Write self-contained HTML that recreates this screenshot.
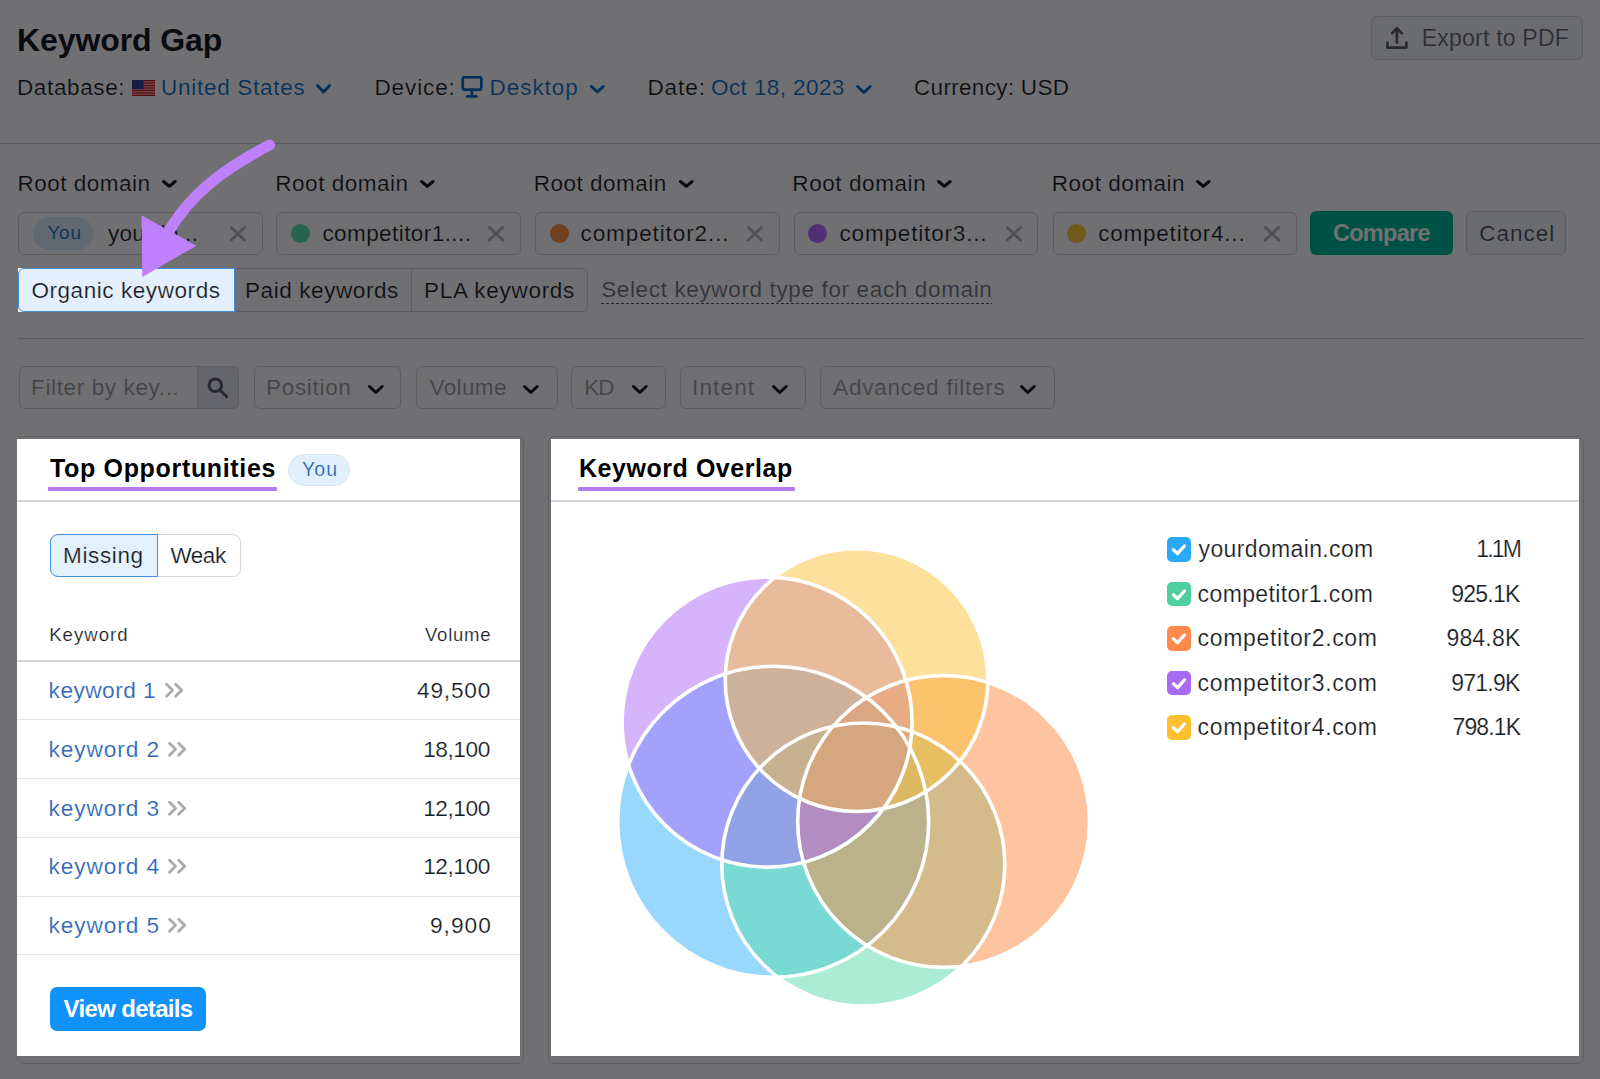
<!DOCTYPE html>
<html><head><meta charset="utf-8"><style>
html,body{margin:0;padding:0;}
body{width:1600px;height:1079px;overflow:hidden;position:relative;background:#fff;font-family:"Liberation Sans",sans-serif;}
.t{position:absolute;white-space:nowrap;line-height:1;}
.b{position:absolute;}
#ov{position:absolute;left:0;top:0;width:1600px;height:1079px;background:rgba(0,0,4,0.56);}
</style></head><body>
<svg class="b" style="left:132px;top:80px" width="23" height="16" viewBox="0 0 23 16"><rect width="23" height="16" fill="#F4A0A0"/><rect y="0.00" width="23" height="1.23" fill="#D02828"/><rect y="2.46" width="23" height="1.23" fill="#D02828"/><rect y="4.92" width="23" height="1.23" fill="#D02828"/><rect y="7.38" width="23" height="1.23" fill="#D02828"/><rect y="9.85" width="23" height="1.23" fill="#D02828"/><rect y="12.31" width="23" height="1.23" fill="#D02828"/><rect y="14.77" width="23" height="1.23" fill="#D02828"/><rect width="11.5" height="9" fill="#3A3C9A"/></svg>
<svg class="b" style="left:314.25px;top:82.00px" width="19.00" height="13.50"><path d="M3.50 3.50 L9.50 10.00 L15.50 3.50" fill="none" stroke="#006DCA" stroke-width="3" stroke-linecap="round" stroke-linejoin="round"/></svg>
<svg class="b" style="left:461px;top:76px" width="23" height="22" viewBox="0 0 23 22"><rect x="1.75" y="1.25" width="18.6" height="12.3" rx="1.6" fill="none" stroke="#006DCA" stroke-width="2.7"/><rect x="9.6" y="14" width="2.6" height="5.5" fill="#006DCA"/><rect x="5" y="19" width="11.8" height="2.7" rx="1.3" fill="#006DCA"/></svg>
<svg class="b" style="left:587.50px;top:83.00px" width="18.75" height="12.50"><path d="M3.50 3.50 L9.38 9.00 L15.25 3.50" fill="none" stroke="#006DCA" stroke-width="3" stroke-linecap="round" stroke-linejoin="round"/></svg>
<svg class="b" style="left:853.90px;top:82.50px" width="19.70" height="13.00"><path d="M3.50 3.50 L9.85 9.50 L16.20 3.50" fill="none" stroke="#006DCA" stroke-width="3" stroke-linecap="round" stroke-linejoin="round"/></svg>
<div class="b" style="left:1370.5px;top:16px;width:212.00px;height:43.50px;border:1px solid #D3D5DB;border-radius:6px;box-sizing:border-box;background:#F4F5F9"></div>
<svg class="b" style="left:1384px;top:25px" width="26" height="26" viewBox="0 0 26 26"><path d="M3.4 17.7 V22.6 H22.4 V17.7" fill="none" stroke="#5E616B" stroke-width="2.7" stroke-linecap="round" stroke-linejoin="round"/><path d="M12.9 17.6 V3.8" fill="none" stroke="#5E616B" stroke-width="2.7" stroke-linecap="round"/><path d="M8 8.3 L12.9 3.3 L17.8 8.3" fill="none" stroke="#5E616B" stroke-width="2.7" stroke-linecap="round" stroke-linejoin="round"/></svg>
<div class="b" style="left:0px;top:143px;width:1600.00px;height:1.00px;background:#D0D2D8"></div>
<svg class="b" style="left:159.90px;top:178.00px" width="18.70" height="11.75"><path d="M3.50 3.50 L9.35 8.25 L15.20 3.50" fill="none" stroke="#171A22" stroke-width="3" stroke-linecap="round" stroke-linejoin="round"/></svg>
<div class="b" style="left:18.4px;top:211.5px;width:244.50px;height:43.25px;border:1px solid #D3D5DB;border-radius:6px;box-sizing:border-box;background:#fff"></div>
<svg class="b" style="left:228.20px;top:223.60px" width="20.00" height="19.50"><path d="M3.40 3.40 L16.60 16.10 M16.60 3.40 L3.40 16.10" fill="none" stroke="#B4B5BA" stroke-width="2.8" stroke-linecap="round"/></svg>
<div class="b" style="left:32.7px;top:217px;width:60.30px;height:32.50px;background:#E0EDF8;border-radius:16px"></div>
<svg class="b" style="left:417.75px;top:178.00px" width="18.70" height="11.75"><path d="M3.50 3.50 L9.35 8.25 L15.20 3.50" fill="none" stroke="#171A22" stroke-width="3" stroke-linecap="round" stroke-linejoin="round"/></svg>
<div class="b" style="left:276.25px;top:211.5px;width:244.50px;height:43.25px;border:1px solid #D3D5DB;border-radius:6px;box-sizing:border-box;background:#fff"></div>
<svg class="b" style="left:486.05px;top:223.60px" width="20.00" height="19.50"><path d="M3.40 3.40 L16.60 16.10 M16.60 3.40 L3.40 16.10" fill="none" stroke="#B4B5BA" stroke-width="2.8" stroke-linecap="round"/></svg>
<div class="b" style="left:290.75px;top:224px;width:19.00px;height:19.00px;background:#5BE6B0;border-radius:50%"></div>
<svg class="b" style="left:676.50px;top:178.00px" width="18.70" height="11.75"><path d="M3.50 3.50 L9.35 8.25 L15.20 3.50" fill="none" stroke="#171A22" stroke-width="3" stroke-linecap="round" stroke-linejoin="round"/></svg>
<div class="b" style="left:535px;top:211.5px;width:244.50px;height:43.25px;border:1px solid #D3D5DB;border-radius:6px;box-sizing:border-box;background:#fff"></div>
<svg class="b" style="left:744.80px;top:223.60px" width="20.00" height="19.50"><path d="M3.40 3.40 L16.60 16.10 M16.60 3.40 L3.40 16.10" fill="none" stroke="#B4B5BA" stroke-width="2.8" stroke-linecap="round"/></svg>
<div class="b" style="left:549.5px;top:224px;width:19.00px;height:19.00px;background:#FF9447;border-radius:50%"></div>
<svg class="b" style="left:935.25px;top:178.00px" width="18.70" height="11.75"><path d="M3.50 3.50 L9.35 8.25 L15.20 3.50" fill="none" stroke="#171A22" stroke-width="3" stroke-linecap="round" stroke-linejoin="round"/></svg>
<div class="b" style="left:793.75px;top:211.5px;width:244.50px;height:43.25px;border:1px solid #D3D5DB;border-radius:6px;box-sizing:border-box;background:#fff"></div>
<svg class="b" style="left:1003.55px;top:223.60px" width="20.00" height="19.50"><path d="M3.40 3.40 L16.60 16.10 M16.60 3.40 L3.40 16.10" fill="none" stroke="#B4B5BA" stroke-width="2.8" stroke-linecap="round"/></svg>
<div class="b" style="left:808.25px;top:224px;width:19.00px;height:19.00px;background:#B46EFF;border-radius:50%"></div>
<svg class="b" style="left:1194.00px;top:178.00px" width="18.70" height="11.75"><path d="M3.50 3.50 L9.35 8.25 L15.20 3.50" fill="none" stroke="#171A22" stroke-width="3" stroke-linecap="round" stroke-linejoin="round"/></svg>
<div class="b" style="left:1052.5px;top:211.5px;width:244.50px;height:43.25px;border:1px solid #D3D5DB;border-radius:6px;box-sizing:border-box;background:#fff"></div>
<svg class="b" style="left:1262.30px;top:223.60px" width="20.00" height="19.50"><path d="M3.40 3.40 L16.60 16.10 M16.60 3.40 L3.40 16.10" fill="none" stroke="#B4B5BA" stroke-width="2.8" stroke-linecap="round"/></svg>
<div class="b" style="left:1067.0px;top:224px;width:19.00px;height:19.00px;background:#FFCC3C;border-radius:50%"></div>
<div class="b" style="left:1310.2px;top:211.1px;width:142.80px;height:43.75px;background:#00B898;border-radius:6px"></div>
<div class="b" style="left:1466.3px;top:211.1px;width:99.40px;height:43.75px;border:1px solid #D3D5DB;border-radius:6px;box-sizing:border-box;background:#F4F5F9"></div>
<div class="b" style="left:18px;top:268px;width:570.00px;height:44.40px;border:1px solid #D3D5DB;border-radius:6px;box-sizing:border-box;background:#fff"></div>
<div class="b" style="left:411px;top:268px;width:1.00px;height:44.40px;background:#D3D5DB"></div>
<svg class="b" style="left:601px;top:303px" width="391" height="1"><line x1="0" y1="0.5" x2="391" y2="0.5" stroke="#5A5C66" stroke-width="1" stroke-dasharray="3 2"/></svg>
<div class="b" style="left:18px;top:338px;width:1565.00px;height:1.00px;background:#D0D2D8"></div>
<div class="b" style="left:18.5px;top:366px;width:220.90px;height:43.30px;border:1px solid #D3D5DB;border-radius:6px;box-sizing:border-box;background:#fff;overflow:hidden"></div>
<div class="b" style="left:196.6px;top:366px;width:42.80px;height:43.30px;border:1px solid #D3D5DB;border-radius:0 6px 6px 0;box-sizing:border-box;background:#E6E8EE"></div>
<svg class="b" style="left:206px;top:376px" width="24" height="24" viewBox="0 0 24 24"><circle cx="9.3" cy="9.3" r="6.3" fill="none" stroke="#5E616B" stroke-width="3"/><path d="M14.2 14.2 L20.6 20.6" stroke="#5E616B" stroke-width="3" stroke-linecap="round"/></svg>
<div class="b" style="left:253.5px;top:366px;width:147.80px;height:43.30px;border:1px solid #D3D5DB;border-radius:6px;box-sizing:border-box;background:#fff"></div>
<svg class="b" style="left:366.30px;top:382.50px" width="19.70" height="13.00"><path d="M3.50 3.50 L9.85 9.50 L16.20 3.50" fill="none" stroke="#171A22" stroke-width="3" stroke-linecap="round" stroke-linejoin="round"/></svg>
<div class="b" style="left:415.75px;top:366px;width:141.75px;height:43.30px;border:1px solid #D3D5DB;border-radius:6px;box-sizing:border-box;background:#fff"></div>
<svg class="b" style="left:521.40px;top:382.50px" width="19.70" height="13.00"><path d="M3.50 3.50 L9.85 9.50 L16.20 3.50" fill="none" stroke="#171A22" stroke-width="3" stroke-linecap="round" stroke-linejoin="round"/></svg>
<div class="b" style="left:570.6px;top:366px;width:95.80px;height:43.30px;border:1px solid #D3D5DB;border-radius:6px;box-sizing:border-box;background:#fff"></div>
<svg class="b" style="left:630.30px;top:382.50px" width="19.70" height="13.00"><path d="M3.50 3.50 L9.85 9.50 L16.20 3.50" fill="none" stroke="#171A22" stroke-width="3" stroke-linecap="round" stroke-linejoin="round"/></svg>
<div class="b" style="left:679.5px;top:366px;width:126.00px;height:43.30px;border:1px solid #D3D5DB;border-radius:6px;box-sizing:border-box;background:#fff"></div>
<svg class="b" style="left:770.20px;top:382.50px" width="19.70" height="13.00"><path d="M3.50 3.50 L9.85 9.50 L16.20 3.50" fill="none" stroke="#171A22" stroke-width="3" stroke-linecap="round" stroke-linejoin="round"/></svg>
<div class="b" style="left:820px;top:366px;width:234.50px;height:43.30px;border:1px solid #D3D5DB;border-radius:6px;box-sizing:border-box;background:#fff"></div>
<svg class="b" style="left:1018.20px;top:382.50px" width="19.70" height="13.00"><path d="M3.50 3.50 L9.85 9.50 L16.20 3.50" fill="none" stroke="#171A22" stroke-width="3" stroke-linecap="round" stroke-linejoin="round"/></svg>
<div class="b" style="left:16.5px;top:435.5px;width:507.00px;height:628.00px;border:1.5px solid #D9DAE0;border-radius:7px;box-sizing:border-box;background:#fff"></div>
<div class="b" style="left:547.5px;top:435.5px;width:1036.00px;height:628.00px;border:1.5px solid #D9DAE0;border-radius:7px;box-sizing:border-box;background:#fff"></div>
<div class="t" id="title" style="left:17.00px;top:23.91px;font-size:32px;font-weight:700;color:#171A22;letter-spacing:-0.100px;">Keyword Gap</div>
<div class="t" id="database" style="left:17.00px;top:77.45px;font-size:22.5px;font-weight:400;color:#171A22;letter-spacing:0.625px;-webkit-text-stroke:0.2px #fff;">Database:</div>
<div class="t" id="united" style="left:161.00px;top:77.45px;font-size:22.5px;font-weight:400;color:#006DCA;letter-spacing:0.726px;-webkit-text-stroke:0.2px #fff;">United States</div>
<div class="t" id="device" style="left:374.50px;top:77.45px;font-size:22.5px;font-weight:400;color:#171A22;letter-spacing:0.873px;-webkit-text-stroke:0.2px #fff;">Device:</div>
<div class="t" id="desktop" style="left:489.50px;top:77.45px;font-size:22.5px;font-weight:400;color:#006DCA;letter-spacing:0.959px;-webkit-text-stroke:0.2px #fff;">Desktop</div>
<div class="t" id="date" style="left:647.40px;top:77.45px;font-size:22.5px;font-weight:400;color:#171A22;letter-spacing:0.945px;-webkit-text-stroke:0.2px #fff;">Date:</div>
<div class="t" id="oct" style="left:711.00px;top:77.45px;font-size:22.5px;font-weight:400;color:#006DCA;letter-spacing:0.409px;-webkit-text-stroke:0.2px #fff;">Oct 18, 2023</div>
<div class="t" id="currency" style="left:914.00px;top:77.45px;font-size:22.5px;font-weight:400;color:#171A22;letter-spacing:0.309px;-webkit-text-stroke:0.2px #fff;">Currency: USD</div>
<div class="t" id="export" style="left:1421.80px;top:27.33px;font-size:23px;font-weight:400;color:#5E616B;letter-spacing:0.210px;-webkit-text-stroke:0.2px #fff;">Export to PDF</div>
<div class="t" id="rd0" style="left:17.40px;top:173.20px;font-size:22.5px;font-weight:400;color:#171A22;letter-spacing:0.500px;-webkit-text-stroke:0.2px #fff;">Root domain</div>
<div class="t" id="rd1" style="left:275.30px;top:173.20px;font-size:22.5px;font-weight:400;color:#171A22;letter-spacing:0.520px;-webkit-text-stroke:0.2px #fff;">Root domain</div>
<div class="t" id="rd2" style="left:533.80px;top:173.20px;font-size:22.5px;font-weight:400;color:#171A22;letter-spacing:0.500px;-webkit-text-stroke:0.2px #fff;">Root domain</div>
<div class="t" id="rd3" style="left:792.30px;top:173.20px;font-size:22.5px;font-weight:400;color:#171A22;letter-spacing:0.580px;-webkit-text-stroke:0.2px #fff;">Root domain</div>
<div class="t" id="rd4" style="left:1051.80px;top:173.20px;font-size:22.5px;font-weight:400;color:#171A22;letter-spacing:0.520px;-webkit-text-stroke:0.2px #fff;">Root domain</div>
<div class="t" id="you_in" style="left:47.40px;top:223.42px;font-size:19px;font-weight:400;color:#006DCA;letter-spacing:0.770px;-webkit-text-stroke:0.2px #E0EDF8;">You</div>
<div class="t" id="yourdo" style="left:108.00px;top:223.05px;font-size:22.5px;font-weight:400;color:#171A22;letter-spacing:0.295px;-webkit-text-stroke:0.2px #fff;">yourdo...</div>
<div class="t" id="comp1" style="left:322.40px;top:223.05px;font-size:22.5px;font-weight:400;color:#171A22;letter-spacing:0.428px;-webkit-text-stroke:0.2px #fff;">competitor1....</div>
<div class="t" id="comp2" style="left:580.50px;top:223.05px;font-size:22.5px;font-weight:400;color:#171A22;letter-spacing:0.903px;-webkit-text-stroke:0.2px #fff;">competitor2...</div>
<div class="t" id="comp3" style="left:839.50px;top:223.05px;font-size:22.5px;font-weight:400;color:#171A22;letter-spacing:0.825px;-webkit-text-stroke:0.2px #fff;">competitor3...</div>
<div class="t" id="comp4" style="left:1098.20px;top:223.05px;font-size:22.5px;font-weight:400;color:#171A22;letter-spacing:0.780px;-webkit-text-stroke:0.2px #fff;">competitor4...</div>
<div class="t" id="compare" style="left:1333.00px;top:222.31px;font-size:23.5px;font-weight:700;color:#FFFFFF;letter-spacing:-0.726px;">Compare</div>
<div class="t" id="cancel" style="left:1479.20px;top:223.15px;font-size:22.5px;font-weight:400;color:#44474F;letter-spacing:1.000px;-webkit-text-stroke:0.2px #fff;">Cancel</div>
<div class="t" id="paid" style="left:245.00px;top:279.95px;font-size:22.5px;font-weight:400;color:#171A22;letter-spacing:0.583px;-webkit-text-stroke:0.2px #fff;">Paid keywords</div>
<div class="t" id="pla" style="left:424.00px;top:279.95px;font-size:22.5px;font-weight:400;color:#171A22;letter-spacing:0.704px;-webkit-text-stroke:0.2px #fff;">PLA keywords</div>
<div class="t" id="select" style="left:601.20px;top:279.25px;font-size:22.5px;font-weight:400;color:#6C6E79;letter-spacing:0.638px;-webkit-text-stroke:0.2px #fff;">Select keyword type for each domain</div>
<div class="t" id="filter" style="left:31.00px;top:377.15px;font-size:22.5px;font-weight:400;color:#9597A0;letter-spacing:0.633px;-webkit-text-stroke:0.2px #fff;">Filter by key...</div>
<div class="t" id="position" style="left:266.00px;top:377.15px;font-size:22.5px;font-weight:400;color:#9597A0;letter-spacing:0.688px;-webkit-text-stroke:0.2px #fff;">Position</div>
<div class="t" id="volume" style="left:429.60px;top:377.15px;font-size:22.5px;font-weight:400;color:#9597A0;letter-spacing:0.368px;-webkit-text-stroke:0.2px #fff;">Volume</div>
<div class="t" id="kd" style="left:584.20px;top:377.15px;font-size:22.5px;font-weight:400;color:#9597A0;letter-spacing:-0.960px;-webkit-text-stroke:0.2px #fff;">KD</div>
<div class="t" id="intent" style="left:692.00px;top:377.15px;font-size:22.5px;font-weight:400;color:#9597A0;letter-spacing:1.164px;-webkit-text-stroke:0.2px #fff;">Intent</div>
<div class="t" id="adv" style="left:833.20px;top:377.15px;font-size:22.5px;font-weight:400;color:#9597A0;letter-spacing:0.763px;-webkit-text-stroke:0.2px #fff;">Advanced filters</div>
<div id="ov"></div>
<div class="b" style="left:18px;top:267.6px;width:215.60px;height:44.80px;background:#fff"></div>
<div class="b" style="left:18px;top:267.6px;width:216.60px;height:44.80px;background:#E3EFFC;border:1px solid #3F8FE0;border-radius:6px 0 0 6px;box-sizing:border-box"></div>
<div class="b" style="left:17.2px;top:439px;width:503.05px;height:616.60px;background:#fff"></div>
<div class="b" style="left:550.6px;top:439px;width:1028.50px;height:616.60px;background:#fff"></div>
<div class="b" style="left:48.25px;top:487.4px;width:228.85px;height:4.00px;background:#B57BF5;border-radius:1px"></div>
<div class="b" style="left:287.9px;top:454.3px;width:61.90px;height:31.50px;background:#E2F0FE;border:1px solid #D6E6F6;box-sizing:border-box;border-radius:16px"></div>
<div class="b" style="left:17.2px;top:499.5px;width:503.05px;height:2.00px;background:#D6D7DC"></div>
<div class="b" style="left:577.6px;top:487.4px;width:217.80px;height:4.00px;background:#B57BF5;border-radius:1px"></div>
<div class="b" style="left:550.6px;top:499.5px;width:1028.50px;height:2.00px;background:#D6D7DC"></div>
<div class="b" style="left:50.1px;top:533.7px;width:190.50px;height:43.80px;border:1px solid #D3D5DB;border-radius:8px;box-sizing:border-box;background:#fff"></div>
<div class="b" style="left:50.1px;top:533.7px;width:108.10px;height:43.80px;border:1.5px solid #3F8FE0;border-radius:8px 0 0 8px;box-sizing:border-box;background:#E3F1FD"></div>
<div class="b" style="left:17.2px;top:660px;width:503.05px;height:2.00px;background:#D6D7DC"></div>
<svg class="b" style="left:163px;top:681.00px" width="22" height="19" viewBox="0 0 22 19"><path d="M3.5 3.2 L9.6 9.2 L3.5 15.2 M12.6 3.2 L18.7 9.2 L12.6 15.2" fill="none" stroke="#A9ABB3" stroke-width="2.8" stroke-linecap="round" stroke-linejoin="round"/></svg>
<svg class="b" style="left:166px;top:739.80px" width="22" height="19" viewBox="0 0 22 19"><path d="M3.5 3.2 L9.6 9.2 L3.5 15.2 M12.6 3.2 L18.7 9.2 L12.6 15.2" fill="none" stroke="#A9ABB3" stroke-width="2.8" stroke-linecap="round" stroke-linejoin="round"/></svg>
<svg class="b" style="left:166px;top:798.60px" width="22" height="19" viewBox="0 0 22 19"><path d="M3.5 3.2 L9.6 9.2 L3.5 15.2 M12.6 3.2 L18.7 9.2 L12.6 15.2" fill="none" stroke="#A9ABB3" stroke-width="2.8" stroke-linecap="round" stroke-linejoin="round"/></svg>
<svg class="b" style="left:166px;top:857.40px" width="22" height="19" viewBox="0 0 22 19"><path d="M3.5 3.2 L9.6 9.2 L3.5 15.2 M12.6 3.2 L18.7 9.2 L12.6 15.2" fill="none" stroke="#A9ABB3" stroke-width="2.8" stroke-linecap="round" stroke-linejoin="round"/></svg>
<svg class="b" style="left:166px;top:916.20px" width="22" height="19" viewBox="0 0 22 19"><path d="M3.5 3.2 L9.6 9.2 L3.5 15.2 M12.6 3.2 L18.7 9.2 L12.6 15.2" fill="none" stroke="#A9ABB3" stroke-width="2.8" stroke-linecap="round" stroke-linejoin="round"/></svg>
<div class="b" style="left:17.2px;top:719px;width:503.05px;height:1.00px;background:#E3E4E8"></div>
<div class="b" style="left:17.2px;top:778px;width:503.05px;height:1.00px;background:#E3E4E8"></div>
<div class="b" style="left:17.2px;top:836.6px;width:503.05px;height:1.00px;background:#E3E4E8"></div>
<div class="b" style="left:17.2px;top:896.4px;width:503.05px;height:1.00px;background:#E3E4E8"></div>
<div class="b" style="left:17.2px;top:954px;width:503.05px;height:1.00px;background:#E3E4E8"></div>
<div class="b" style="left:49.7px;top:986.9px;width:156.30px;height:43.70px;background:#1191FA;border-radius:7px"></div>
<div class="b" style="left:1166.5px;top:537.25px;width:24.70px;height:24.50px;background:#2AAAF6;border-radius:5px"></div>
<svg class="b" style="left:1166.5px;top:537.25px" width="25" height="25" viewBox="0 0 25 25"><path d="M6.4 12.8 L10.5 16.6 L17.4 9" fill="none" stroke="#fff" stroke-width="3.3" stroke-linecap="round" stroke-linejoin="round"/></svg>
<div class="b" style="left:1166.5px;top:581.7px;width:24.70px;height:24.50px;background:#4FCFA0;border-radius:5px"></div>
<svg class="b" style="left:1166.5px;top:581.70px" width="25" height="25" viewBox="0 0 25 25"><path d="M6.4 12.8 L10.5 16.6 L17.4 9" fill="none" stroke="#fff" stroke-width="3.3" stroke-linecap="round" stroke-linejoin="round"/></svg>
<div class="b" style="left:1166.5px;top:626.15px;width:24.70px;height:24.50px;background:#FF8A4C;border-radius:5px"></div>
<svg class="b" style="left:1166.5px;top:626.15px" width="25" height="25" viewBox="0 0 25 25"><path d="M6.4 12.8 L10.5 16.6 L17.4 9" fill="none" stroke="#fff" stroke-width="3.3" stroke-linecap="round" stroke-linejoin="round"/></svg>
<div class="b" style="left:1166.5px;top:670.6px;width:24.70px;height:24.50px;background:#A66BF2;border-radius:5px"></div>
<svg class="b" style="left:1166.5px;top:670.60px" width="25" height="25" viewBox="0 0 25 25"><path d="M6.4 12.8 L10.5 16.6 L17.4 9" fill="none" stroke="#fff" stroke-width="3.3" stroke-linecap="round" stroke-linejoin="round"/></svg>
<div class="b" style="left:1166.5px;top:715.05px;width:24.70px;height:24.50px;background:#FFC030;border-radius:5px"></div>
<svg class="b" style="left:1166.5px;top:715.05px" width="25" height="25" viewBox="0 0 25 25"><path d="M6.4 12.8 L10.5 16.6 L17.4 9" fill="none" stroke="#fff" stroke-width="3.3" stroke-linecap="round" stroke-linejoin="round"/></svg>
<svg class="b" style="left:0;top:0" width="1600" height="1079">
<circle cx="773.2" cy="821.8" r="155.5" fill="#31B1F9" fill-opacity="0.5"/>
<circle cx="863.3" cy="864.5" r="141.5" fill="#59D9A9" fill-opacity="0.5"/>
<circle cx="943.6" cy="821.4" r="145.9" fill="#FD8941" fill-opacity="0.5"/>
<circle cx="767.1" cy="722.1" r="145" fill="#AB69F9" fill-opacity="0.5"/>
<circle cx="856.6" cy="680.1" r="131.4" fill="#F9C139" fill-opacity="0.5"/>
<circle cx="773.2" cy="821.8" r="155.5" fill="none" stroke="#fff" stroke-width="3.6"/>
<circle cx="863.3" cy="864.5" r="141.5" fill="none" stroke="#fff" stroke-width="3.6"/>
<circle cx="943.6" cy="821.4" r="145.9" fill="none" stroke="#fff" stroke-width="3.6"/>
<circle cx="767.1" cy="722.1" r="145" fill="none" stroke="#fff" stroke-width="3.6"/>
<circle cx="856.6" cy="680.1" r="131.4" fill="none" stroke="#fff" stroke-width="3.6"/>
</svg>
<div class="t" id="organic" style="left:31.40px;top:279.95px;font-size:22.5px;font-weight:400;color:#171A22;letter-spacing:0.567px;-webkit-text-stroke:0.2px #E3EFFC;">Organic keywords</div>
<div class="t" id="topopp" style="left:50.00px;top:455.94px;font-size:25px;font-weight:700;color:#000000;letter-spacing:0.666px;">Top Opportunities</div>
<div class="t" id="kwo" style="left:579.00px;top:455.94px;font-size:25px;font-weight:700;color:#000000;letter-spacing:0.544px;">Keyword Overlap</div>
<div class="t" id="youb" style="left:302.00px;top:459.79px;font-size:19.5px;font-weight:400;color:#1F5DB2;letter-spacing:1.120px;-webkit-text-stroke:0.2px #E2F0FE;">You</div>
<div class="t" id="missing" style="left:63.00px;top:545.05px;font-size:22.5px;font-weight:400;color:#171A22;letter-spacing:0.641px;-webkit-text-stroke:0.2px #E3F1FD;">Missing</div>
<div class="t" id="weak" style="left:170.40px;top:545.05px;font-size:22.5px;font-weight:400;color:#171A22;letter-spacing:-0.440px;-webkit-text-stroke:0.2px #fff;">Weak</div>
<div class="t" id="kwh" style="left:49.20px;top:626.14px;font-size:18.5px;font-weight:400;color:#171A22;letter-spacing:1.051px;-webkit-text-stroke:0.2px #fff;">Keyword</div>
<div class="t" id="volh" style="left:425.00px;top:626.14px;font-size:18.5px;font-weight:400;color:#171A22;letter-spacing:0.768px;-webkit-text-stroke:0.2px #fff;">Volume</div>
<div class="t" id="kw0" style="left:48.60px;top:678.98px;font-size:22.7px;font-weight:400;color:#2A62B4;letter-spacing:0.455px;-webkit-text-stroke:0.2px #fff;">keyword 1</div>
<div class="t" id="n0" style="left:417.00px;top:678.98px;font-size:22.7px;font-weight:400;color:#171A22;letter-spacing:0.800px;-webkit-text-stroke:0.2px #fff;">49,500</div>
<div class="t" id="kw1" style="left:48.60px;top:737.78px;font-size:22.7px;font-weight:400;color:#2A62B4;letter-spacing:0.890px;-webkit-text-stroke:0.2px #fff;">keyword 2</div>
<div class="t" id="n1" style="left:423.20px;top:737.78px;font-size:22.7px;font-weight:400;color:#171A22;letter-spacing:-0.464px;-webkit-text-stroke:0.2px #fff;">18,100</div>
<div class="t" id="kw2" style="left:48.60px;top:796.58px;font-size:22.7px;font-weight:400;color:#2A62B4;letter-spacing:0.890px;-webkit-text-stroke:0.2px #fff;">keyword 3</div>
<div class="t" id="n2" style="left:423.20px;top:796.58px;font-size:22.7px;font-weight:400;color:#171A22;letter-spacing:-0.464px;-webkit-text-stroke:0.2px #fff;">12,100</div>
<div class="t" id="kw3" style="left:48.60px;top:855.38px;font-size:22.7px;font-weight:400;color:#2A62B4;letter-spacing:0.890px;-webkit-text-stroke:0.2px #fff;">keyword 4</div>
<div class="t" id="n3" style="left:423.20px;top:855.38px;font-size:22.7px;font-weight:400;color:#171A22;letter-spacing:-0.464px;-webkit-text-stroke:0.2px #fff;">12,100</div>
<div class="t" id="kw4" style="left:48.60px;top:914.18px;font-size:22.7px;font-weight:400;color:#2A62B4;letter-spacing:0.890px;-webkit-text-stroke:0.2px #fff;">keyword 5</div>
<div class="t" id="n4" style="left:430.00px;top:914.18px;font-size:22.7px;font-weight:400;color:#171A22;letter-spacing:1.000px;-webkit-text-stroke:0.2px #fff;">9,900</div>
<div class="t" id="ld0" style="left:1198.60px;top:538.33px;font-size:23px;font-weight:400;color:#171A22;letter-spacing:0.358px;-webkit-text-stroke:0.2px #fff;">yourdomain.com</div>
<div class="t" id="ln0" style="left:1476.20px;top:538.33px;font-size:23px;font-weight:400;color:#171A22;letter-spacing:-1.828px;-webkit-text-stroke:0.2px #fff;">1.1M</div>
<div class="t" id="ld1" style="left:1197.60px;top:582.93px;font-size:23px;font-weight:400;color:#171A22;letter-spacing:0.384px;-webkit-text-stroke:0.2px #fff;">competitor1.com</div>
<div class="t" id="ln1" style="left:1451.20px;top:582.93px;font-size:23px;font-weight:400;color:#171A22;letter-spacing:-0.736px;-webkit-text-stroke:0.2px #fff;">925.1K</div>
<div class="t" id="ld2" style="left:1197.60px;top:627.13px;font-size:23px;font-weight:400;color:#171A22;letter-spacing:0.670px;-webkit-text-stroke:0.2px #fff;">competitor2.com</div>
<div class="t" id="ln2" style="left:1446.40px;top:627.13px;font-size:23px;font-weight:400;color:#171A22;letter-spacing:0.200px;-webkit-text-stroke:0.2px #fff;">984.8K</div>
<div class="t" id="ld3" style="left:1197.60px;top:672.03px;font-size:23px;font-weight:400;color:#171A22;letter-spacing:0.670px;-webkit-text-stroke:0.2px #fff;">competitor3.com</div>
<div class="t" id="ln3" style="left:1451.20px;top:672.03px;font-size:23px;font-weight:400;color:#171A22;letter-spacing:-0.736px;-webkit-text-stroke:0.2px #fff;">971.9K</div>
<div class="t" id="ld4" style="left:1197.60px;top:715.73px;font-size:23px;font-weight:400;color:#171A22;letter-spacing:0.670px;-webkit-text-stroke:0.2px #fff;">competitor4.com</div>
<div class="t" id="ln4" style="left:1452.60px;top:715.73px;font-size:23px;font-weight:400;color:#171A22;letter-spacing:-0.904px;-webkit-text-stroke:0.2px #fff;">798.1K</div>
<div class="t" id="vd" style="left:63.60px;top:996.68px;font-size:24px;font-weight:700;color:#FFFFFF;letter-spacing:-0.671px;">View details</div>
<svg class="b" style="left:0;top:0" width="1600" height="1079"><path d="M269.5 145 C230.5 165.7, 190.9 190.4, 166 236" fill="none" stroke="#BF80FC" stroke-width="11" stroke-linecap="round"/><path d="M141.5 215.3 L196.4 245.7 L142.3 276.9 Z" fill="#BF80FC"/></svg>
</body></html>
